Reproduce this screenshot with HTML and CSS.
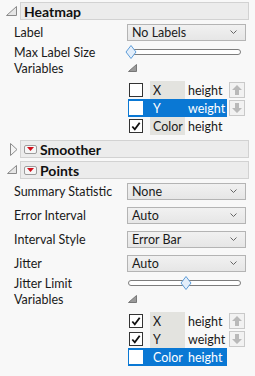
FILE: index.html
```html
<!DOCTYPE html>
<html lang="en">
<head>
<meta charset="UTF-8">
<title>Heatmap options</title>
<link rel="stylesheet" href="styles.css">
</head>
<body>

<div class="panel">

  <div class="head">
    <span class="twisty"><svg width="13" height="11" viewBox="0 0 13 11"><polygon points="11.5,0.5 11.5,9.5 1.5,9.5" fill="#e6e6e6" stroke="#8a8a8a"/></svg></span>
    <div class="bar"><span class="title">Heatmap</span></div>
  </div>
  <div class="section">
    <div class="field tall"><span class="lbl">Label</span>
      <div class="combo">No Labels<svg class="chev" width="7" height="5" viewBox="0 0 7 5"><polyline points="0.5,0.5 3.5,3.5 6.5,0.5" fill="none" stroke="#666"/></svg></div>
    </div>
    <div class="field"><span class="lbl">Max Label Size</span>
      <div class="slider"><div class="track"></div><svg class="thumb" style="left:-3px" width="12" height="14" viewBox="0 0 12 14"><polygon points="6,0.5 11,7 6,13.5 1,7" fill="#e3eefa" stroke="#5d9cd8"/></svg></div>
    </div>
    <div class="field"><span class="lbl">Variables</span>
      <svg class="grip" width="9" height="8" viewBox="0 0 9 8"><polygon points="8.5,0.5 8.5,7.5 0.5,7.5" fill="#9a9a9a" stroke="#777"/></svg>
    </div>
    <div class="vars">
      <div class="items">
        <div class="item"><span class="box"></span><span class="role">X</span><span class="col">height</span></div>
        <div class="item sel"><span class="box"></span><span class="role">Y</span><span class="col">weight</span></div>
        <div class="item"><span class="box"><svg width="13" height="13" viewBox="0 0 13 13"><polyline points="2.5,6.5 5.2,9.5 10.5,2.5" fill="none" stroke="#111" stroke-width="2"/></svg></span><span class="role">Color</span><span class="col">height</span></div>
      </div>
      <div class="moves">
        <span class="move"><svg width="12" height="12" viewBox="0 0 12 12"><polygon points="6,1 11,6 8,6 8,11 4,11 4,6 1,6" fill="#b9b9b9"/></svg></span>
        <span class="move"><svg width="12" height="12" viewBox="0 0 12 12"><polygon points="6,11 11,6 8,6 8,1 4,1 4,6 1,6" fill="#b9b9b9"/></svg></span>
      </div>
    </div>
  </div>

  <div class="head gap">
    <span class="twisty"><svg width="8" height="13" viewBox="0 0 8 13"><polygon points="0.5,0.5 7,6.5 0.5,12.5" fill="#f4f4f4" stroke="#8a8a8a"/></svg></span>
    <div class="bar"><span class="menu"><svg width="7" height="4" viewBox="0 0 7 4"><polygon points="0,0 7,0 3.5,4" fill="#d0101c"/></svg></span><span class="title">Smoother</span></div>
  </div>

  <div class="head near">
    <span class="twisty"><svg width="11" height="10" viewBox="0 0 11 10"><polygon points="9.5,0.5 9.5,8.5 0.5,8.5" fill="#e6e6e6" stroke="#8a8a8a"/></svg></span>
    <div class="bar"><span class="menu"><svg width="7" height="4" viewBox="0 0 7 4"><polygon points="0,0 7,0 3.5,4" fill="#d0101c"/></svg></span><span class="title">Points</span></div>
  </div>
  <div class="section">
    <div class="field tall"><span class="lbl">Summary Statistic</span>
      <div class="combo">None<svg class="chev" width="7" height="5" viewBox="0 0 7 5"><polyline points="0.5,0.5 3.5,3.5 6.5,0.5" fill="none" stroke="#666"/></svg></div>
    </div>
    <div class="field tall"><span class="lbl">Error Interval</span>
      <div class="combo">Auto<svg class="chev" width="7" height="5" viewBox="0 0 7 5"><polyline points="0.5,0.5 3.5,3.5 6.5,0.5" fill="none" stroke="#666"/></svg></div>
    </div>
    <div class="field tall"><span class="lbl">Interval Style</span>
      <div class="combo">Error Bar<svg class="chev" width="7" height="5" viewBox="0 0 7 5"><polyline points="0.5,0.5 3.5,3.5 6.5,0.5" fill="none" stroke="#666"/></svg></div>
    </div>
    <div class="field tall"><span class="lbl">Jitter</span>
      <div class="combo">Auto<svg class="chev" width="7" height="5" viewBox="0 0 7 5"><polyline points="0.5,0.5 3.5,3.5 6.5,0.5" fill="none" stroke="#666"/></svg></div>
    </div>
    <div class="field"><span class="lbl">Jitter Limit</span>
      <div class="slider"><div class="track"></div><svg class="thumb" style="left:52px" width="12" height="14" viewBox="0 0 12 14"><polygon points="6,0.5 11,7 6,13.5 1,7" fill="#e3eefa" stroke="#5d9cd8"/></svg></div>
    </div>
    <div class="field"><span class="lbl">Variables</span>
      <svg class="grip" width="9" height="8" viewBox="0 0 9 8"><polygon points="8.5,0.5 8.5,7.5 0.5,7.5" fill="#9a9a9a" stroke="#777"/></svg>
    </div>
    <div class="vars">
      <div class="items">
        <div class="item"><span class="box"><svg width="13" height="13" viewBox="0 0 13 13"><polyline points="2.5,6.5 5.2,9.5 10.5,2.5" fill="none" stroke="#111" stroke-width="2"/></svg></span><span class="role">X</span><span class="col">height</span></div>
        <div class="item"><span class="box"><svg width="13" height="13" viewBox="0 0 13 13"><polyline points="2.5,6.5 5.2,9.5 10.5,2.5" fill="none" stroke="#111" stroke-width="2"/></svg></span><span class="role">Y</span><span class="col">weight</span></div>
        <div class="item sel"><span class="box"></span><span class="role">Color</span><span class="col">height</span></div>
      </div>
      <div class="moves">
        <span class="move"><svg width="12" height="12" viewBox="0 0 12 12"><polygon points="6,1 11,6 8,6 8,11 4,11 4,6 1,6" fill="#b9b9b9"/></svg></span>
        <span class="move"><svg width="12" height="12" viewBox="0 0 12 12"><polygon points="6,11 11,6 8,6 8,1 4,1 4,6 1,6" fill="#b9b9b9"/></svg></span>
      </div>
    </div>
  </div>

</div>

</body>
</html>
```

FILE: styles.css
```css
html, body { margin: 0; padding: 0; }
body { background: #f8f8f8; font-family: Lato, "Noto Sans", sans-serif; font-size: 12.5px; color: #1a1a1a; width: 255px; height: 376px; overflow: hidden; }
.panel { padding-top: 2px; }

.head { display: flex; align-items: center; height: 18px; }
.head.gap { margin-top: 5px; }
.head.near { margin-top: 3px; }
.twisty { width: 20px; height: 18px; display: flex; align-items: center; justify-content: flex-end; padding-right: 2px; box-sizing: border-box; }
.bar { width: 229px; height: 18px; box-sizing: border-box; border: 1px solid #d2d2d2; background: #ececec; display: flex; align-items: center; padding-left: 3px; gap: 3px; }
.title { font-weight: bold; font-size: 14px; color: #111; }
.menu { width: 13px; height: 9px; box-sizing: border-box; border: 1px solid #9c9c9c; border-radius: 2px; background: #f6f6f6; display: flex; align-items: center; justify-content: center; }

.section { display: flex; flex-direction: column; }
.field { display: flex; align-items: center; height: 16px; padding-left: 14px; }
.field.tall { height: 24px; }
.lbl { width: 113px; flex: none; }
.combo { width: 119px; height: 17px; box-sizing: border-box; border: 1px solid #b4b4b4; background: linear-gradient(#f1f1f1, #e6e6e6); display: flex; align-items: center; justify-content: space-between; padding: 0 8px 0 4px; }
.chev { flex: none; }

.slider { position: relative; width: 113px; height: 14px; margin-left: 1px; display: flex; align-items: center; }
.track { width: 100%; height: 6px; box-sizing: border-box; border: 1px solid #7d7d7d; border-radius: 3px; background: #fff; }
.thumb { position: absolute; top: 0; }
.grip { margin-left: 1px; }

.vars { display: flex; margin-top: 5px; margin-left: 127px; }
.items { width: 100px; display: flex; flex-direction: column; }
.item { display: flex; align-items: stretch; height: 18px; margin-left: 1px; }
.box { width: 14px; height: 14px; box-sizing: border-box; border: 1px solid #333; background: #fff; align-self: center; margin-left: 1px; margin-right: 7px; display: flex; align-items: center; justify-content: center; }
.role { width: 35px; background: #e3e3df; display: flex; align-items: center; padding-left: 3px; box-sizing: border-box; margin-right: 3px; }
.col { display: flex; align-items: center; }
.item.sel { background: #0a78d4; color: #fff; }
.item.sel .role { background: transparent; }
.item.sel .box { border-color: #fff; }

.moves { display: flex; flex-direction: column; gap: 2px; margin-left: 2px; padding-top: 1px; }
.move { width: 16px; height: 16px; box-sizing: border-box; border: 1px solid #c9c9c9; background: #f2f2f2; display: flex; align-items: center; justify-content: center; }
```
